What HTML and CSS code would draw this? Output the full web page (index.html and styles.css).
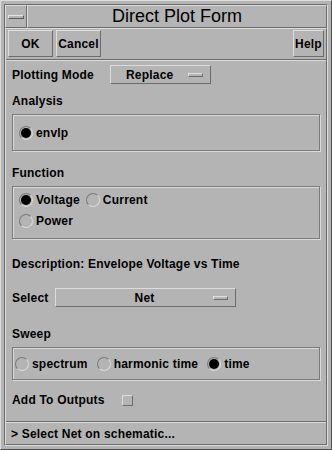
FILE: index.html
```html
<!DOCTYPE html>
<html lang="en">
<head>
    <meta charset="UTF-8">
    <title>Direct Plot Form</title>
    <link rel="stylesheet" href="styles.css">
</head>
<body>
    <div class="window">
        <div class="inner">
            <div class="titlebar">
                <div class="menu-btn"><span class="menu-bar"></span></div>
                <div class="title">Direct Plot Form</div>
            </div>

            <div class="client">
                <div class="buttons">
                    <button class="btn btn-ok">OK</button>
                    <button class="btn btn-cancel">Cancel</button>
                    <button class="btn btn-help">Help</button>
                </div>
                <div class="separator"></div>

                <div class="form">
                    <div class="row row-mode">
                        <span class="label label-mode">Plotting Mode</span>
                        <div class="option option-mode">
                            <span class="option-text">Replace</span>
                            <span class="indicator"></span>
                        </div>
                    </div>

                    <div class="label heading heading-analysis">Analysis</div>
                    <div class="group group-analysis">
                        <div class="radios">
                            <label class="radio on"><span class="dot"></span>envlp</label>
                        </div>
                    </div>

                    <div class="label heading heading-function">Function</div>
                    <div class="group group-function">
                        <div class="radios">
                            <label class="radio on"><span class="dot"></span>Voltage</label>
                            <label class="radio"><span class="dot"></span>Current</label>
                        </div>
                        <div class="radios">
                            <label class="radio"><span class="dot"></span>Power</label>
                        </div>
                    </div>

                    <div class="label heading heading-desc">Description: Envelope Voltage vs Time</div>

                    <div class="row row-select">
                        <span class="label label-select">Select</span>
                        <div class="option option-select">
                            <span class="option-text">Net</span>
                            <span class="indicator"></span>
                        </div>
                    </div>

                    <div class="label heading heading-sweep">Sweep</div>
                    <div class="group group-sweep">
                        <div class="radios radios-sweep">
                            <label class="radio"><span class="dot"></span>spectrum</label>
                            <label class="radio"><span class="dot"></span>harmonic time</label>
                            <label class="radio on"><span class="dot"></span>time</label>
                        </div>
                    </div>

                    <div class="row row-add">
                        <span class="label">Add To Outputs</span>
                        <span class="checkbox"></span>
                    </div>
                </div>

                <div class="separator separator-status"></div>
                <div class="status">&gt; Select Net on schematic...</div>
            </div>
        </div>
    </div>
</body>
</html>
```

FILE: styles.css
```css
body {
    margin: 0;
    padding: 0;
    background-color: #b4b4b4;
    font-family: "Liberation Sans", Arial, sans-serif;
    color: #000;
}

.window {
    width: 332px;
    height: 450px;
    box-sizing: border-box;
    border: 1px solid;
    border-color: #dcdcdc #4e4e4e #4e4e4e #dcdcdc;
    padding: 3px;
}

.inner {
    height: 100%;
    box-sizing: border-box;
    border: 1px solid;
    border-color: #6c6c6c #dcdcdc #dcdcdc #6c6c6c;
    display: flex;
    flex-direction: column;
}

.titlebar {
    display: flex;
    height: 23px;
}

.menu-btn {
    width: 22px;
    box-sizing: border-box;
    border: 1px solid;
    border-color: #dcdcdc #6c6c6c #6c6c6c #dcdcdc;
    display: flex;
    align-items: center;
    justify-content: center;
}

.menu-bar {
    width: 14px;
    height: 2px;
    border: 1px solid;
    border-color: #e4e4e4 #5a5a5a #5a5a5a #e4e4e4;
}

.title {
    flex: 1;
    box-sizing: border-box;
    border: 1px solid;
    border-color: #dcdcdc #6c6c6c #6c6c6c #dcdcdc;
    text-align: center;
    font-size: 18px;
    line-height: 21px;
}

.client {
    flex: 1;
    box-sizing: border-box;
    border: 1px solid;
    border-color: #dcdcdc #6c6c6c #6c6c6c #dcdcdc;
    display: flex;
    flex-direction: column;
}

.buttons {
    display: flex;
    padding: 1px 2px 0 2px;
    gap: 3px;
}

.btn {
    height: 27px;
    box-sizing: border-box;
    background-color: #b4b4b4;
    border: 1px solid;
    border-color: #dcdcdc #6c6c6c #6c6c6c #dcdcdc;
    font-family: "Liberation Sans", Arial, sans-serif;
    font-weight: bold;
    font-size: 12px;
    letter-spacing: 0.2px;
    padding: 0;
    color: #000;
}

.btn-ok,
.btn-cancel {
    width: 45px;
}

.btn-help {
    width: 31px;
    margin-left: auto;
}

.separator {
    height: 0;
    margin-top: 2px;
    border-top: 1px solid #6c6c6c;
    border-bottom: 1px solid #dcdcdc;
}

.form {
    padding: 0 6px;
    flex: 1;
}

.label {
    font-weight: bold;
    font-size: 12px;
    letter-spacing: 0.2px;
    line-height: 16px;
    white-space: nowrap;
}

.row {
    display: flex;
    align-items: center;
}

.row-mode {
    margin-top: 4px;
}

.label-mode {
    width: 98px;
}

.option {
    height: 19px;
    box-sizing: border-box;
    border: 1px solid;
    border-color: #dcdcdc #6c6c6c #6c6c6c #dcdcdc;
    display: flex;
    align-items: center;
    font-weight: bold;
    font-size: 12px;
    letter-spacing: 0.2px;
}

.option-mode {
    width: 101px;
    padding: 0 7px 0 15px;
}

.option-select {
    width: 181px;
    padding: 0 7px 0 0;
}

.option-text {
    flex: 1;
}

.option-select .option-text {
    text-align: center;
    padding-left: 20px;
}

.indicator {
    width: 13px;
    height: 2px;
    border: 1px solid;
    border-color: #e0e0e0 #6c6c6c #6c6c6c #e0e0e0;
}

.heading-analysis {
    margin-top: 9px;
}

.group {
    margin-top: 4px;
    border: 1px solid #7a7a7a;
    box-shadow: inset 1px 1px 0 #dadada, 1px 1px 0 #dadada;
    padding: 0 6px;
}

.group-analysis {
    margin-top: 5px;
    height: 37px;
    box-sizing: border-box;
    display: flex;
    align-items: center;
}

.radios {
    display: flex;
    gap: 6px;
}

.radio {
    display: flex;
    align-items: center;
    gap: 3px;
    font-weight: bold;
    font-size: 12px;
    letter-spacing: 0.2px;
    line-height: 16px;
}

.dot {
    width: 14px;
    height: 14px;
    box-sizing: border-box;
    border-radius: 50%;
    border: 1px solid;
    border-color: #7a7a7a #dadada #dadada #7a7a7a;
    display: flex;
    align-items: center;
    justify-content: center;
}

.radio.on .dot::after {
    content: "";
    width: 10px;
    height: 10px;
    border-radius: 50%;
    background-color: #000;
}

.heading-function {
    margin-top: 14px;
}

.group-function {
    margin-top: 5px;
    height: 53px;
    box-sizing: border-box;
    padding-top: 5px;
    display: flex;
    flex-direction: column;
    gap: 5px;
}

.heading-desc {
    margin-top: 17px;
}

.row-select {
    margin-top: 16px;
}

.label-select {
    width: 43px;
}

.heading-sweep {
    margin-top: 19px;
}

.group-sweep {
    margin-top: 5px;
    height: 33px;
    box-sizing: border-box;
    display: flex;
    align-items: center;
    padding: 0 2px;
}

.radios-sweep {
    gap: 9px;
}

.row-add {
    margin-top: 12px;
    height: 16px;
}

.checkbox {
    width: 11px;
    height: 11px;
    margin-left: 17px;
    box-sizing: border-box;
    border: 1px solid;
    border-color: #dcdcdc #6c6c6c #6c6c6c #dcdcdc;
}

.separator-status {
    margin-top: 0;
}

.status {
    font-weight: bold;
    font-size: 12px;
    letter-spacing: 0.2px;
    line-height: 20px;
    padding: 1px 5px 0;
}
```
